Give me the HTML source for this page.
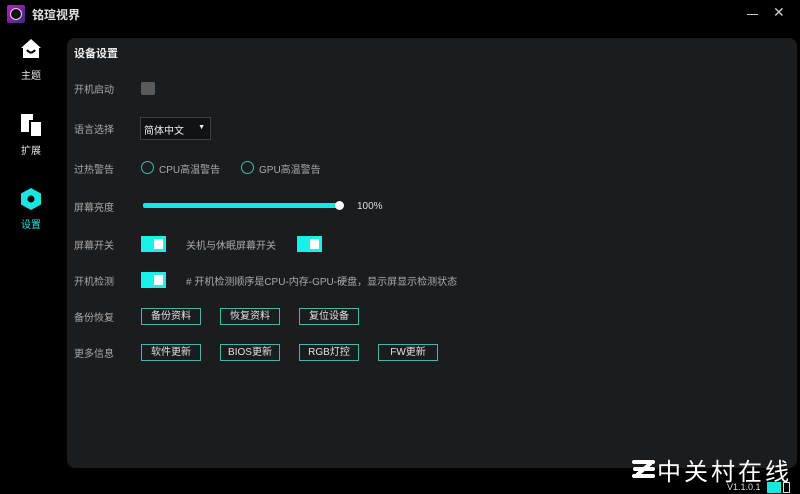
<!DOCTYPE html>
<html><head><meta charset="utf-8"><style>
*{margin:0;padding:0;box-sizing:border-box}
body{width:800px;height:494px;background:#000;position:relative;overflow:hidden;font-family:"Liberation Sans","Noto Sans CJK SC",sans-serif;color:#bfbfbf}
.a{position:absolute;white-space:nowrap}
.lbl{font-size:10px;color:#a8a8a8;left:74px}
.panel{position:absolute;left:67px;top:38px;width:730px;height:430px;background:#1b1c1e;border-radius:8px}
.tg{position:absolute;width:25px;height:16px;background:#19f0e6;}
.tg::after{content:"";position:absolute;right:3px;top:3px;width:9px;height:10px;background:#fff}
.btn{position:absolute;width:60px;height:17px;border:1.5px solid #3fb7b0;color:#e0e0e0;font-size:10px;text-align:center;line-height:15px}
.rad{position:absolute;width:13px;height:13px;border:1.5px solid #3fb7b0;border-radius:50%}
.side{position:absolute;font-size:10px;color:#e8e8e8}
</style></head><body>
<div class="a" style="left:7px;top:5px;width:18px;height:18px;background:linear-gradient(135deg,#c018c0,#3a2a8a);border-radius:2px"></div>
<div class="a" style="left:10px;top:8px;width:12px;height:12px;border:1.5px solid #ddd;border-radius:50%;background:#111"></div>
<div class="a" style="left:32px;top:6px;font-size:12px;font-weight:bold;color:#e0e0e0">铭瑄视界</div>
<div class="a" style="left:747px;top:14px;width:11px;height:1px;background:#ccc"></div>
<div class="a" style="left:773px;top:4px;font-size:14px;color:#ccc">✕</div>
<svg class="a" style="left:20px;top:38px" width="22" height="22" viewBox="0 0 22 22"><path d="M11 1 L21 10 H19 V20 H3 V10 H1 Z" fill="#fff"/><path d="M7 12 Q11 17 15 12" stroke="#000" stroke-width="2.2" fill="none"/></svg>
<div class="side" style="left:21px;top:67px">主题</div>
<svg class="a" style="left:21px;top:114px" width="22" height="24"><rect x="0" y="0" width="12" height="18" fill="#fff"/><rect x="9" y="7" width="12" height="16" fill="#fff" stroke="#000" stroke-width="2"/></svg>
<div class="side" style="left:21px;top:142px">扩展</div>
<svg class="a" style="left:20px;top:187px" width="22" height="24" viewBox="0 0 22 24"><path d="M11 1 L21 6.5 V17.5 L11 23 L1 17.5 V6.5 Z" fill="#19e6e0"/><circle cx="11" cy="12" r="3.5" fill="#000"/></svg>
<div class="side" style="left:21px;top:216px;color:#19e6e0">设置</div>
<div class="panel"></div>
<div class="a" style="left:74px;top:45px;font-size:11px;font-weight:bold;color:#eee">设备设置</div>
<div class="a lbl" style="top:81px">开机启动</div>
<div class="a" style="left:141px;top:82px;width:14px;height:13px;background:#5a5a5a;border-radius:2px"></div>
<div class="a lbl" style="top:121px">语言选择</div>
<div class="a" style="left:140px;top:117px;width:71px;height:23px;background:#101216;border:1px solid #3a3f48;font-size:10px;color:#eee;padding:4px 3px">简体中文<span style="position:absolute;right:5px;top:6px;font-size:7px">▼</span></div>
<div class="a lbl" style="top:161px">过热警告</div>
<div class="rad" style="left:141px;top:161px"></div>
<div class="a" style="left:159px;top:161px;font-size:10px;color:#aaa">CPU高温警告</div>
<div class="rad" style="left:241px;top:161px"></div>
<div class="a" style="left:259px;top:161px;font-size:10px;color:#aaa">GPU高温警告</div>
<div class="a lbl" style="top:199px">屏幕亮度</div>
<div class="a" style="left:143px;top:203px;width:197px;height:5px;background:#19e6e0;border-radius:2px"></div>
<div class="a" style="left:335px;top:201px;width:9px;height:9px;background:#fff;border-radius:50%"></div>
<div class="a" style="left:357px;top:201px;font-size:10px;color:#ddd">100%</div>
<div class="a lbl" style="top:237px">屏幕开关</div>
<div class="tg" style="left:141px;top:236px"></div>
<div class="a" style="left:186px;top:237px;font-size:10px;color:#aaa">关机与休眠屏幕开关</div>
<div class="tg" style="left:297px;top:236px"></div>
<div class="a lbl" style="top:273px">开机检测</div>
<div class="tg" style="left:141px;top:272px"></div>
<div class="a" style="left:186px;top:273px;font-size:10px;color:#aaa"># 开机检测顺序是CPU-内存-GPU-硬盘，显示屏显示检测状态</div>
<div class="a lbl" style="top:309px">备份恢复</div>
<div class="btn" style="left:141px;top:308px">备份资料</div>
<div class="btn" style="left:220px;top:308px">恢复资料</div>
<div class="btn" style="left:299px;top:308px">复位设备</div>
<div class="a lbl" style="top:345px">更多信息</div>
<div class="btn" style="left:141px;top:344px">软件更新</div>
<div class="btn" style="left:220px;top:344px">BIOS更新</div>
<div class="btn" style="left:299px;top:344px">RGB灯控</div>
<div class="btn" style="left:378px;top:344px">FW更新</div>
<svg class="a" style="left:632px;top:460px" width="24" height="18"><path d="M2 2 H21 M3 9 H21 M2 16 H21" stroke="#fff" stroke-width="4" fill="none" stroke-linecap="round"/><path d="M19 3 L5 15" stroke="#fff" stroke-width="4"/></svg>
<div class="a" style="left:657px;top:452px;font-size:24px;color:#fff;letter-spacing:3px">中关村在线</div>
<div class="a" style="left:727px;top:482px;font-size:9px;color:#ddd">V1.1.0.1</div>
<div class="a" style="left:767px;top:482px;width:14px;height:11px;background:#19e6e0"></div>
<div class="a" style="left:783px;top:482px;width:7px;height:11px;border:1px solid #ddd"></div>
</body></html>
